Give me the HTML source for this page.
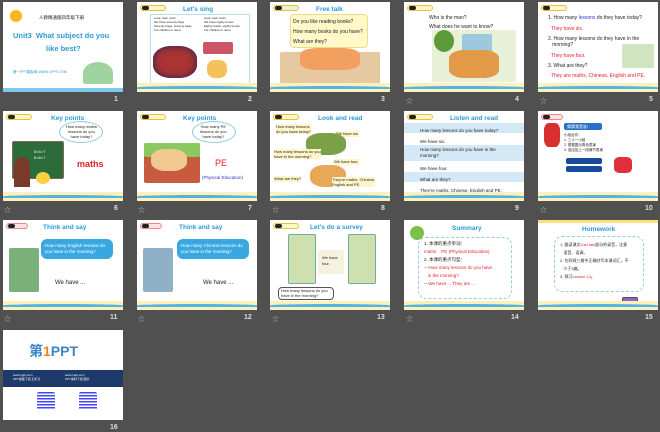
<!DOCTYPE html>
<html><head><meta charset="utf-8"><style>
*{margin:0;padding:0;box-sizing:border-box}
body{width:660px;height:432px;background:#505050;position:relative;overflow:hidden;font-family:"Liberation Sans","Noto Sans CJK SC",sans-serif}
.s{position:absolute;width:120px;height:90px;background:#fff;overflow:hidden}
.s .ft{position:absolute;left:0;right:0;bottom:0;height:9px;background:#fdf0b8}
.s .ft:before{content:"";position:absolute;left:0;right:0;top:3px;height:3px;background:#4fb4e8;border-radius:50% 50% 0 0}
.s .tp{position:absolute;left:0;right:0;top:0;height:3px;background:#fbe27a}
.n{position:absolute;color:#ddd;font-size:7px;font-weight:bold}
.st{position:absolute;color:#bbb;font-size:7px}
.t{position:absolute;font-size:5px;color:#222;line-height:6px;white-space:nowrap}
.ti{position:absolute;font-size:6.5px;color:#2a9ad8;font-weight:bold;white-space:nowrap}
.tag{position:absolute;left:3px;top:3px;width:26px;height:6px;background:#fff7c8;border:1px solid #e8c040;border-radius:3px}
.tag:before{content:"";position:absolute;left:1px;top:0;width:7px;height:4px;background:#222;border-radius:2px}
.r{color:#e8202a}
.pic{position:absolute;border-radius:2px}
</style></head><body>

<!-- 1 -->
<div class="s" style="left:3px;top:2px">
<div class="pic" style="left:7px;top:8px;width:12px;height:12px;border-radius:50%;background:#f7b620"></div>
<div class="t" style="left:36px;top:13px;font-size:4.5px">人教精通版四年级下册</div>
<div class="ti" style="left:10px;top:29px;font-size:7.5px">Unit3&nbsp; What subject do you</div>
<div class="ti" style="left:43px;top:42px;font-size:7.5px">like best?</div>
<div class="t" style="left:10px;top:67px;font-size:3.5px;color:#2a9ad8">第一PPT模板网-WWW.1PPT.COM</div>
<div class="pic" style="left:80px;top:60px;width:30px;height:22px;background:#9fd4a0;border-radius:50% 50% 10% 10%"></div>
<div style="position:absolute;left:0;right:0;bottom:0;height:4px;background:#7ec8ec"></div>
</div>
<div class="n" style="left:114px;top:96px">1</div>

<!-- 2 -->
<div class="s" style="left:137px;top:2px">
<div class="tag"></div><div class="ti" style="left:46px;top:4px">Let's sing</div>
<div style="position:absolute;left:13px;top:12px;width:100px;height:70px;border:1px solid #bde"></div>
<div class="t" style="left:17px;top:14px;font-size:3px;line-height:4px">Look, look, look!<br>We have seventy bags<br>Seventy bags, seventy bags<br>For children in need</div>
<div class="t" style="left:67px;top:14px;font-size:3px;line-height:4px">Look, look, look!<br>We have eighty books<br>Eighty books, eighty books<br>For children in need</div>
<div class="pic" style="left:16px;top:44px;width:44px;height:32px;background:#a33;border-radius:40%;box-shadow:inset 0 0 8px #225"></div>
<div class="pic" style="left:66px;top:40px;width:30px;height:12px;background:#c56"></div>
<div class="pic" style="left:70px;top:58px;width:20px;height:18px;background:#f3c25a;border-radius:40%"></div>
<div class="ft"></div></div>
<div class="n" style="left:248px;top:96px">2</div>

<!-- 3 -->
<div class="s" style="left:270px;top:2px">
<div class="tag" style="background:#e8f5c8"></div><div class="ti" style="left:46px;top:4px;color:#2a9ad8">Free talk</div>
<div style="position:absolute;left:20px;top:12px;width:78px;height:34px;background:#fff8c8;border:1px solid #eddc88;border-radius:4px"></div>
<div class="t" style="left:23px;top:15px;font-size:5px;line-height:10px">Do you like reading books?<br>How many books do you have?<br>What are they?</div>
<div class="pic" style="left:10px;top:50px;width:100px;height:32px;background:#e6c9a0"></div>
<div class="pic" style="left:30px;top:46px;width:60px;height:22px;background:#f2a060;border-radius:30%"></div>
<div class="ft"></div></div>
<div class="n" style="left:381px;top:96px">3</div>

<!-- 4 -->
<div class="s" style="left:404px;top:2px">
<div class="tag"></div>
<div class="t" style="left:25px;top:12px;font-size:5px;line-height:9px">Who is the man?<br>What does he want to know?</div>
<div class="pic" style="left:28px;top:28px;width:84px;height:52px;background:#e8f0d8"></div>
<div class="pic" style="left:58px;top:32px;width:30px;height:20px;background:#9cc8e0"></div>
<div class="pic" style="left:30px;top:28px;width:20px;height:22px;background:#5a9a38;border-radius:50%"></div>
<div class="pic" style="left:45px;top:48px;width:50px;height:28px;background:#e39a48;border-radius:30%"></div>
<div class="ft"></div></div>
<div class="st" style="left:406px;top:96px">☆</div><div class="n" style="left:515px;top:96px">4</div>

<!-- 5 -->
<div class="s" style="left:538px;top:2px">
<div class="tag"></div>
<div class="t" style="left:10px;top:13px">1. How many <span style="color:#33d">lessons</span> do they have today?</div>
<div class="t r" style="left:13px;top:24px">They have six.</div>
<div class="t" style="left:10px;top:34px">2. How many lessons do they have in the<br>&nbsp;&nbsp;&nbsp;morning?</div>
<div class="t r" style="left:13px;top:51px">They have four.</div>
<div class="t" style="left:10px;top:61px">3. What are they?</div>
<div class="t r" style="left:13px;top:71px">They are maths, Chinese, English and PE.</div>
<div class="pic" style="left:84px;top:42px;width:32px;height:24px;background:#d0e4c0"></div>
<div class="ft"></div></div>
<div class="st" style="left:540px;top:96px">☆</div><div class="n" style="left:649px;top:96px">5</div>

<!-- 6 -->
<div class="s" style="left:3px;top:111px">
<div class="tag"></div><div class="ti" style="left:48px;top:4px">Key points</div>
<div style="position:absolute;left:56px;top:10px;width:44px;height:22px;border:1px solid #8cd;border-radius:50%"></div>
<div class="t" style="left:63px;top:13px;font-size:4px;line-height:5px;text-align:center">How many maths<br>lessons do you<br>have today?</div>
<div class="pic" style="left:9px;top:30px;width:52px;height:38px;background:#2b6c3a;border:1px solid #865"></div>
<div class="t" style="left:31px;top:38px;color:#fff;font-size:4px">5×4=?<br>6×6=?</div>
<div class="pic" style="left:11px;top:46px;width:16px;height:30px;background:#7a3a2a;border-radius:40% 40% 0 0"></div>
<div class="pic" style="left:33px;top:61px;width:14px;height:12px;background:#f8d040;border-radius:50%"></div>
<div class="t r" style="left:74px;top:48px;font-size:9px;font-weight:bold;line-height:10px">maths</div>
<div class="ft"></div></div>
<div class="st" style="left:4px;top:205px">☆</div><div class="n" style="left:114px;top:205px">6</div>

<!-- 7 -->
<div class="s" style="left:137px;top:111px">
<div class="tag"></div><div class="ti" style="left:46px;top:4px">Key points</div>
<div style="position:absolute;left:55px;top:10px;width:44px;height:22px;border:1px solid #8cd;border-radius:50%"></div>
<div class="t" style="left:63px;top:13px;font-size:4px;line-height:5px;text-align:center">How many PE<br>lessons do you<br>have today?</div>
<div class="pic" style="left:7px;top:32px;width:56px;height:40px;background:#c85a40"></div>
<div class="pic" style="left:7px;top:32px;width:56px;height:14px;background:#8cc860"></div>
<div class="pic" style="left:14px;top:38px;width:36px;height:22px;background:#f0c890;border-radius:40%"></div>
<div class="t r" style="left:78px;top:47px;font-size:9px;line-height:10px">PE</div>
<div class="t" style="left:65px;top:64px;color:#33c;font-size:4.5px">(Physical Education)</div>
<div class="ft"></div></div>
<div class="st" style="left:138px;top:205px">☆</div><div class="n" style="left:248px;top:205px">7</div>

<!-- 8 -->
<div class="s" style="left:270px;top:111px">
<div class="tag"></div><div class="ti" style="left:48px;top:4px">Look and read</div>
<div class="t" style="left:6px;top:13px;font-size:4px;line-height:5px;background:#fff5c8">How many lessons<br>do you have today?</div>
<div class="t" style="left:66px;top:20px;font-size:4px;background:#fff5c8">We have six.</div>
<div class="pic" style="left:36px;top:22px;width:40px;height:22px;background:#7aa048;border-radius:40%"></div>
<div class="t" style="left:4px;top:38px;font-size:4px;line-height:5px;background:#fff5c8">How many lessons do you<br>have in the morning?</div>
<div class="t" style="left:64px;top:48px;font-size:4px;background:#fff5c8">We have four.</div>
<div class="pic" style="left:40px;top:54px;width:36px;height:22px;background:#e8a858;border-radius:40%"></div>
<div class="t" style="left:4px;top:65px;font-size:4px;background:#fff5c8">What are they?</div>
<div class="t" style="left:62px;top:66px;font-size:4px;line-height:5px;background:#fff5c8">They're maths, Chinese,<br>English and PE.</div>
<div class="ft"></div></div>
<div class="st" style="left:272px;top:205px">☆</div><div class="n" style="left:381px;top:205px">8</div>

<!-- 9 -->
<div class="s" style="left:404px;top:111px">
<div class="tag"></div><div class="ti" style="left:46px;top:4px">Listen and read</div>
<div style="position:absolute;left:0;right:0;top:12px;height:10px;background:#d4e8f6"></div>
<div style="position:absolute;left:0;right:0;top:34px;height:16px;background:#d4e8f6"></div>
<div style="position:absolute;left:0;right:0;top:61px;height:10px;background:#d4e8f6"></div>
<div class="t" style="left:16px;top:14px;font-size:4.5px;line-height:11px">How many lessons do you have today?<br>We have six.</div>
<div class="t" style="left:16px;top:36px;font-size:4.5px;line-height:5.5px">How many lessons do you have in the<br>morning?</div>
<div class="t" style="left:16px;top:52px;font-size:4.5px;line-height:11px">We have four.<br>What are they?<br>They're maths, Chinese, English and PE.</div>
<div class="ft"></div></div>
<div class="n" style="left:515px;top:205px">9</div>

<!-- 10 -->
<div class="s" style="left:538px;top:111px">
<div class="tag" style="width:22px;background:#fbe2e2;border-color:#e88"></div>
<div class="pic" style="left:6px;top:12px;width:16px;height:24px;background:#d83030;border-radius:30%"></div>
<div class="pic" style="left:26px;top:12px;width:38px;height:7px;background:#2a6fc8"></div>
<div class="t" style="left:29px;top:13px;color:#fff;font-size:4px">猜猜我是谁!</div>
<div class="t" style="left:26px;top:22px;font-size:3.5px;line-height:5px">小组合作：<br>1. 三人一小组<br>2. 根据图示角色表演<br>3. 选出加上一段情节表演</div>
<div class="pic" style="left:28px;top:47px;width:36px;height:6px;background:#1a4a9a"></div>
<div class="pic" style="left:28px;top:55px;width:36px;height:6px;background:#1a4a9a"></div>
<div class="pic" style="left:76px;top:46px;width:18px;height:16px;background:#e0303a;border-radius:30%"></div>
<div class="ft"></div></div>
<div class="st" style="left:540px;top:205px">☆</div><div class="n" style="left:645px;top:205px">10</div>

<!-- 11 -->
<div class="s" style="left:3px;top:220px">
<div class="tag" style="width:22px;background:#fbe2e2;border-color:#e88"></div><div class="ti" style="left:40px;top:4px">Think and say</div>
<div class="pic" style="left:38px;top:19px;width:72px;height:20px;background:#3aa8e0;border-radius:6px"></div>
<div class="t" style="left:42px;top:23px;color:#fff;font-size:4.5px;line-height:6px">How many English lessons do<br>you have in the morning?</div>
<div class="pic" style="left:6px;top:28px;width:30px;height:44px;background:#7ab07a"></div>
<div class="t" style="left:52px;top:60px;font-size:6px">We have ...</div>
<div class="ft"></div></div>
<div class="st" style="left:4px;top:314px">☆</div><div class="n" style="left:110px;top:314px">11</div>

<!-- 12 -->
<div class="s" style="left:137px;top:220px">
<div class="tag" style="width:22px;background:#fbe2e2;border-color:#e88"></div><div class="ti" style="left:42px;top:4px">Think and say</div>
<div class="pic" style="left:40px;top:19px;width:72px;height:20px;background:#3aa8e0;border-radius:6px"></div>
<div class="t" style="left:44px;top:23px;color:#fff;font-size:4.5px;line-height:6px">How many Chinese lessons do<br>you have in the morning?</div>
<div class="pic" style="left:6px;top:28px;width:30px;height:44px;background:#90b0c8"></div>
<div class="t" style="left:66px;top:60px;font-size:6px">We have ...</div>
<div class="ft"></div></div>
<div class="st" style="left:138px;top:314px">☆</div><div class="n" style="left:244px;top:314px">12</div>

<!-- 13 -->
<div class="s" style="left:270px;top:220px">
<div class="tag"></div><div class="ti" style="left:40px;top:4px">Let's do a survey</div>
<div class="pic" style="left:18px;top:14px;width:28px;height:50px;background:#cfe0b0;border:1px solid #7a9"></div>
<div class="pic" style="left:78px;top:14px;width:28px;height:50px;background:#cfe0b0;border:1px solid #7a9"></div>
<div class="pic" style="left:48px;top:30px;width:26px;height:24px;background:#f6f2e0"></div>
<div class="t" style="left:52px;top:35px;font-size:4px">We have<br>four.</div>
<div style="position:absolute;left:8px;top:67px;width:56px;height:13px;background:#fff;border:1px solid #555;border-radius:4px"></div>
<div class="t" style="left:11px;top:68px;font-size:4px;line-height:5px">How many lessons do you<br>have in the morning?</div>
<div class="ft"></div></div>
<div class="st" style="left:272px;top:314px">☆</div><div class="n" style="left:377px;top:314px">13</div>

<!-- 14 -->
<div class="s" style="left:404px;top:220px">
<div class="pic" style="left:6px;top:6px;width:14px;height:14px;background:#7cc04a;border-radius:50%"></div>
<div class="ti" style="left:48px;top:5px">Summary</div>
<div style="position:absolute;left:14px;top:17px;width:94px;height:62px;border:1px dashed #9cd;border-radius:8px"></div>
<div class="t" style="left:20px;top:20px;font-size:4.5px;line-height:8px">1. 本课的重点单词：<br><span class="r">maths &nbsp;&nbsp; PE (Physical Education)</span><br>2. 本课的重点句型：<br><span class="r">—How many lessons do you have<br>&nbsp;&nbsp;&nbsp;in the morning?<br>—We have ... They are ...</span></div>
<div class="ft"></div></div>
<div class="st" style="left:406px;top:314px">☆</div><div class="n" style="left:511px;top:314px">14</div>

<!-- 15 -->
<div class="s" style="left:538px;top:220px">
<div class="tp"></div>
<div class="ti" style="left:44px;top:6px">Homework</div>
<div style="position:absolute;left:16px;top:16px;width:90px;height:56px;border:1px dashed #9cd;border-radius:8px"></div>
<div class="t" style="left:22px;top:21px;font-size:4px;line-height:8px">1. 跟读课文<span class="r">Just talk</span>部分的录音，注意<br>&nbsp;&nbsp;&nbsp;语音、语调。<br>2. 在四线三格中正确抄写本课词汇，不<br>&nbsp;&nbsp;&nbsp;少于3遍。<br>3. 预习<span class="r">Lesson 14</span>。</div>
<div class="pic" style="left:84px;top:77px;width:16px;height:7px;background:#8a6ab8;border:1px solid #546"></div>
<div class="ft"></div></div>
<div class="n" style="left:645px;top:314px">15</div>

<!-- 16 -->
<div class="s" style="left:3px;top:330px">
<div class="t" style="left:26px;top:13px;font-size:14px;line-height:16px;color:#3a86c8;font-weight:bold">第<span style="color:#f08020">1</span>PPT</div>
<div style="position:absolute;left:0;right:0;top:40px;height:17px;background:#1e3a6a"></div>
<div class="t" style="left:10px;top:43px;color:#fff;font-size:3px;line-height:4px">www.1ppt.com<br>PPT模板下载 幻灯片</div>
<div class="t" style="left:62px;top:43px;color:#fff;font-size:3px;line-height:4px">www.1ppt.com<br>PPT素材下载 图片</div>
<div class="pic" style="left:34px;top:62px;width:18px;height:18px;background:repeating-linear-gradient(#44f 0 1.5px,#fff 1.5px 3px)"></div>
<div class="pic" style="left:76px;top:62px;width:18px;height:18px;background:repeating-linear-gradient(#44f 0 1.5px,#fff 1.5px 3px)"></div>
</div>
<div class="n" style="left:110px;top:424px">16</div>

</body></html>
